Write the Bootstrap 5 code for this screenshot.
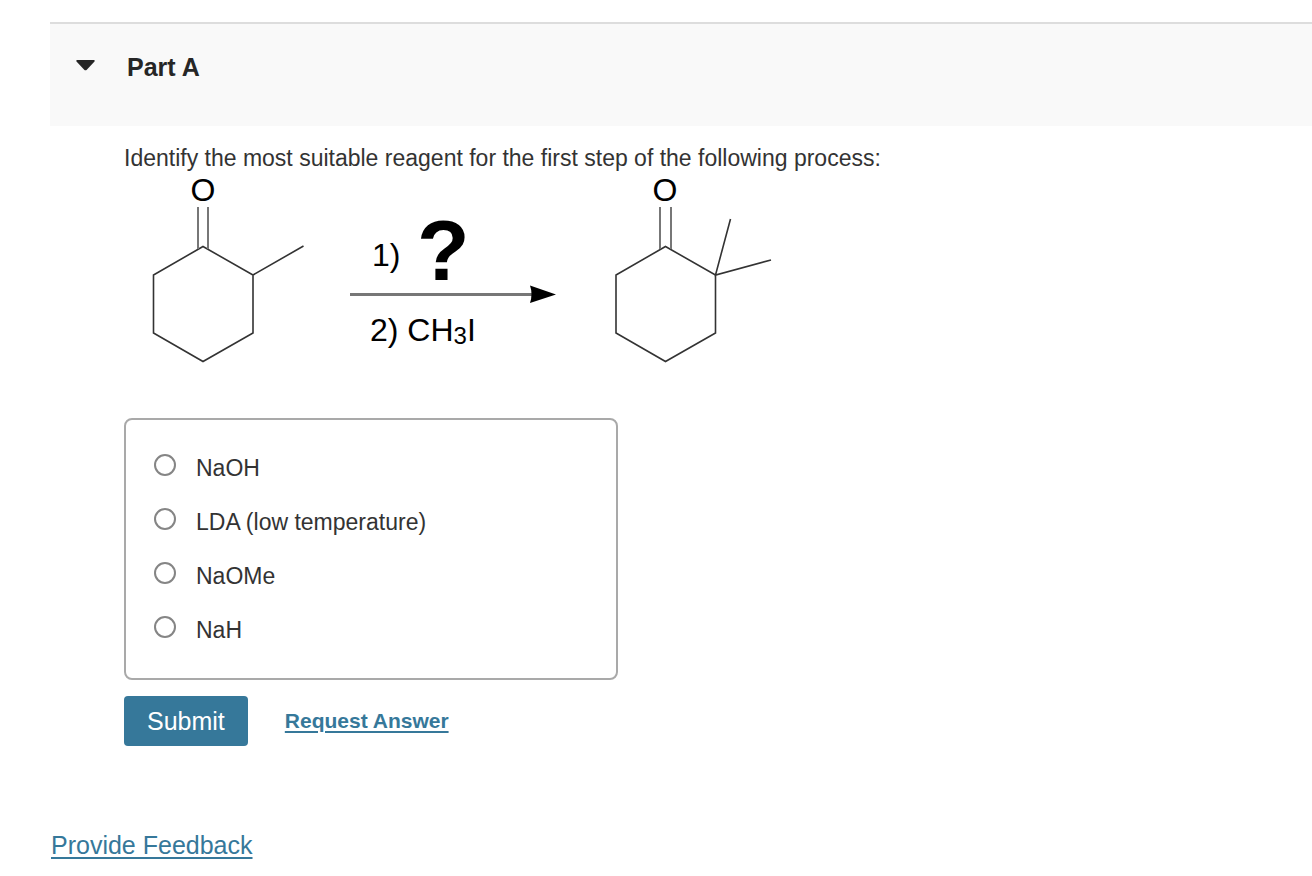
<!DOCTYPE html>
<html lang="en">
<head>
<meta charset="utf-8">
<meta name="viewport" content="width=device-width, initial-scale=1">
<title>Part A</title>
<link href="https://cdn.jsdelivr.net/npm/bootstrap@5.3.0/dist/css/bootstrap.min.css" rel="stylesheet">
<style>
  body { font-family: "Liberation Sans", Arial, sans-serif; font-size: 23px; line-height: 30px; color: #333; background: #fff; }
  .page-wrap { padding: 22px 0 16px 50px; }
  .part-header { background: #f9f9f9; border-top: 2px solid #ddd; min-height: 104px; padding: 27px 26px; }
  .part-toggle { color: #262626; font-size: 25px; line-height: 32px; font-weight: 700; gap: 32px; }
  .part-body { padding: 20px 16px 0 74px; }
  .question { line-height: 24px; }
  .reaction { width: 660px; max-width: 100%; height: auto; }
  .reaction text { font-size: 32px; fill: #000; }
  .reaction .sub-digit { font-size: 24px; }
  .reaction .unknown { font-size: 86px; font-weight: 700; }
  .choices { max-width: 494px; border: 2px solid #a9a9a9; border-radius: 8px; margin-top: 44px; padding: 33px 28px; gap: 24px; }
  .choice { gap: 20px; }
  .choice .form-check-input { width: 22px; height: 22px; margin: 0 0 6px; border: 2px solid #858585; }
  .actions { margin-top: 16px; gap: 37px; }
  .btn-submit { background: #36789a; color: #fff; font-size: 25px; line-height: 34px; padding: 8px 23px; border: 0; border-radius: 4px; }
  .btn-submit:hover { background: #2b617d; color: #fff; }
  .site-link { color: #36789a; text-decoration-thickness: 2px; text-underline-offset: 3px; }
  .request-link { font-size: 21px; font-weight: 700; }
  .feedback-link { font-size: 25px; line-height: 32px; }
  .feedback { margin-top: 83px; padding-left: 1px; }
</style>
</head>
<body>
<main class="page-wrap">
  <header class="part-header">
    <h1 class="m-0 lh-1">
      <button type="button" class="part-toggle d-flex align-items-center bg-transparent border-0 p-0" aria-expanded="true" aria-controls="part-a">
        <svg width="19" height="11" viewBox="0 0 19 11" aria-hidden="true" class="mb-1"><path d="M1.200 0H17.800Q19.400.4 18.300 1.700L10.800 9.700Q9.500 11 8.200 9.700L.7 1.700Q-.4.4 1.200 0Z" fill="#262626"/></svg>
        <span>Part A</span>
      </button>
    </h1>
  </header>

  <section id="part-a" class="part-body">
    <p class="question m-0">Identify the most suitable reagent for the first step of the following process:</p>
    <svg class="reaction d-block" viewBox="0 -4 660 204" role="img" aria-label="2-methylcyclohexanone to 2,2-dimethylcyclohexanone">
      <!-- starting ketone -->
      <g fill="none" stroke="#333" stroke-width="1.6">
        <path d="M79 72.500 129 101V159L79 187.500 29.500 159V101ZM129 101 179.500 72"/>
        <path d="M74 33V75M84 33V75" stroke="#777" stroke-width="2"/>
      </g>
      <text x="79" y="27" text-anchor="middle">O</text>
      <!-- reaction arrow and conditions -->
      <text x="248" y="92">1)</text>
      <text class="unknown" x="293" y="106">?</text>
      <path d="M226 120.500H408" stroke="#777" stroke-width="3"/>
      <path d="M406 111.500 432 120.500 406 129Q409 120 406 111.500Z"/>
      <text x="246" y="167">2) CH<tspan class="sub-digit" dy="3">3</tspan><tspan dy="-3">I</tspan></text>
      <!-- dimethylated ketone -->
      <g fill="none" stroke="#333" stroke-width="1.6">
        <path d="M541.500 72.500 591.500 101V159L541.500 187.500 492 159V101ZM606.500 45 591.500 101 647 86"/>
        <path d="M536 33V75M547 33V75" stroke="#777" stroke-width="2"/>
      </g>
      <text x="541" y="27" text-anchor="middle">O</text>
    </svg>

    <form>
      <div class="choices d-flex flex-column" role="radiogroup" aria-label="Reagent">
        <div class="choice d-flex align-items-center"><input class="form-check-input" type="radio" name="reagent" id="r1"><label for="r1">NaOH</label></div>
        <div class="choice d-flex align-items-center"><input class="form-check-input" type="radio" name="reagent" id="r2"><label for="r2">LDA (low temperature)</label></div>
        <div class="choice d-flex align-items-center"><input class="form-check-input" type="radio" name="reagent" id="r3"><label for="r3">NaOMe</label></div>
        <div class="choice d-flex align-items-center"><input class="form-check-input" type="radio" name="reagent" id="r4"><label for="r4">NaH</label></div>
      </div>
      <div class="actions d-flex align-items-center">
        <button type="button" class="btn btn-submit">Submit</button>
        <a href="#" class="site-link request-link">Request Answer</a>
      </div>
    </form>
  </section>

  <footer class="feedback"><a href="#" class="site-link feedback-link">Provide Feedback</a></footer>
</main>
<script src="https://cdn.jsdelivr.net/npm/bootstrap@5.3.0/dist/js/bootstrap.bundle.min.js"></script>
</body>
</html>
